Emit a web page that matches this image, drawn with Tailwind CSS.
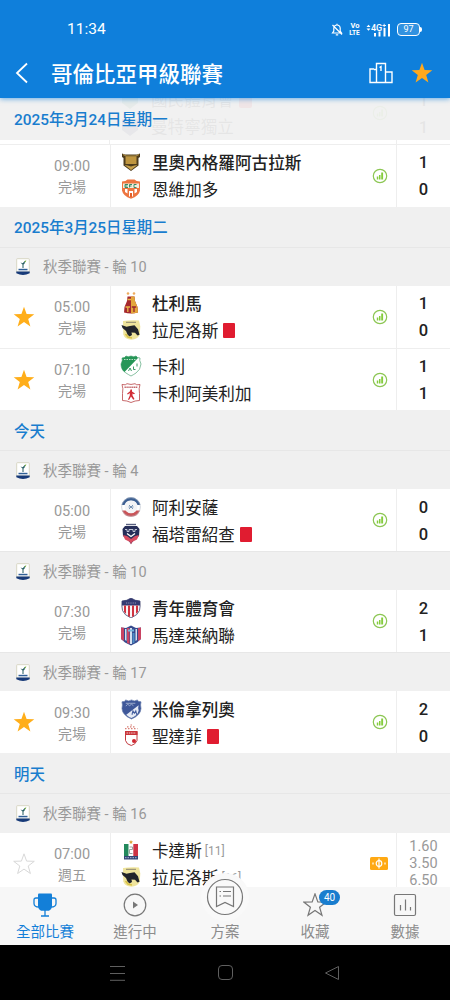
<!DOCTYPE html>
<html lang="zh-Hant">
<head>
    <meta charset="UTF-8">
    <meta name="viewport" content="width=device-width, initial-scale=1.0">
    <title>哥倫比亞甲級聯賽</title>
    <script src="https://cdn.jsdelivr.net/npm/@tailwindcss/browser@4"></script>
</head>
<body class="bg-black font-[Roboto,'Noto_Sans_CJK_TC',sans-serif]">

    <!-- Icons -->
    <svg class="hidden">
        <symbol id="star" viewBox="0 0 22 22"><path d="M11 .8l2.600 7.300 7.700.2-6.100 4.700 2.200 7.500L11 16.100l-6.400 4.400 2.200-7.500L.7 8.300l7.700-.2z"/></symbol>
        <symbol id="stats" viewBox="0 0 16 16">
            <circle cx="8" cy="8" r="6.700" fill="none" stroke="#8cc653" stroke-width="1.200"/>
            <path d="M4.800 8.500h1.500v3H4.800zM7 7h1.500v4.500H7zM9.200 4.500h1.900v7H9.200z" fill="#84cc3c"/>
        </symbol>
        <symbol id="league" viewBox="0 0 14 18">
            <path d="M.7 1.500Q.7.700 1.500.7h11q.8 0 .8.800v12.500H.7z" fill="#fff" stroke="#d0ceb8" stroke-width=".8"/>
            <path d="M.3 13.500h13.400v1.700Q7 18.800.3 15.200z" fill="#173a78"/>
            <path d="M2.500 10.800h9v1.500h-9z" fill="#2f5f96"/>
            <path d="M6.500 10V6.500L4.500 4.500l2.200.8L9.300 2.500 8.500 5.700l-1 .8V10z" fill="#245c60"/>
            <path d="M8.500 3.500l1.800-1.500-.6 2.500z" fill="#7fb53c"/>
        </symbol>
        <symbol id="aguilas" viewBox="0 0 20 20">
            <path d="M1 1.500l3 1h12l3-1v3.500l-1.500 1v7.500L10 19l-7.500-5.500V6L1 5z" fill="#4d3c1d"/>
            <path d="M4.500 4.500h11v7.500h-11z" fill="#bf9640"/>
            <path d="M3.500 13l3 .5 3.500 1 3.500-1 3-.5-6.500 5z" fill="#c7a24d"/>
            <path d="M2 2.500l3 1.500h10l3-1.500" fill="none" stroke="#d0aa50" stroke-width=".8"/>
        </symbol>
        <symbol id="envigado" viewBox="0 0 20 20">
            <path d="M1 2.500Q5 2.500 6.500.5h7Q15 2.500 19 2.500v9Q18 17 10 19.800 2 17 1 11.500z" fill="#ed7540"/>
            <path d="M2 4.500h16v4.500H2z" fill="#f3eee0"/>
            <path d="M4 5.500h3M4 7h2.500M4 5.500v3h3M8.500 8.500v-3H11M8.500 7h2M15.500 5.500h-2.500v3h2.500" fill="none" stroke="#388b65" stroke-width="1"/>
            <path d="M4 10h2.500v4.500L4 13zM8 12h4v5.500H8zM13.500 10H16v3l-2.500 1.500z" fill="#fff"/>
            <path d="M9 14h2v4H9z" fill="#e45e28"/>
        </symbol>
        <symbol id="tolima" viewBox="0 0 20 22">
            <path d="M6.500 4.500h7L14 9l2.500 6 .5 5.500q-7 2-14 0l.5-5.500L6 9z" fill="#a5292f"/>
            <path d="M10 4.500h3.500L14 9l2.500 6 .5 5.500q-3.500 1-7 1z" fill="#e3a63b"/>
            <path d="M4.500 15H9M6.800 15v5M6.500 7.500H10" fill="none" stroke="#e9b548" stroke-width="1.300"/>
            <path d="M10.800 15h4.400M13 15v5" fill="none" stroke="#99252c" stroke-width="1.300"/>
            <circle cx="7" cy="1.500" r="1.300" fill="#efac5e"/><circle cx="13" cy="1.500" r="1.300" fill="#efac5e"/>
        </symbol>
        <symbol id="llaneros" viewBox="0 0 20 20">
            <path d="M2 1q8-1 16-.5l1.300 6-.5 8q-2 5-8.500 5.300-6.500-.5-8-5.300z" fill="#efe49c"/>
            <path d="M5 2.300h10" stroke="#8b8570" stroke-width="1"/>
            <path d="M.5 5l5 1.800L9 6l4.500-.8 3.500 4 1.500 5.500-2 .8-2.500-2.800-3.500-.2.500 2.500-2.500 1.500-2-2L5 11 1.500 8z" fill="#22242a"/>
            <path d="M4.500 14l2.500 3 4 1" fill="none" stroke="#d8c145" stroke-width="1.500"/>
        </symbol>
        <symbol id="cali" viewBox="0 0 22 22">
            <path d="M2 3q3 0 4-2 2 1.500 5 0 3 1.500 5 0 1 2 4 2-1 2 1 6-.5 6-5 9-3 2-5 3-2-1-5-3-5-3-5-9 2-4 1-6z" fill="#fff" stroke="#69b18a" stroke-width=".8"/>
            <path d="M2 3q3 0 4-2 2 1.500 5 0 3 1.500 5 0L18 3 4.500 17Q1 14 1 9q2-4 1-6z" fill="#269657"/>
            <path d="M4 4.500h12" stroke="#b9ddc6" stroke-dasharray="1.500 1"/>
            <path d="M8.500 16l1.500-3 1.500 3M13.500 11.500v3h2M17 8.500v3" fill="none" stroke="#3b9a66" stroke-width="1"/>
        </symbol>
        <symbol id="america" viewBox="0 0 20 20">
            <path d="M1 1.500q4 1 5-.8 4 1.500 8 0 1 1.800 5 .8-1.500 4-.5 9v7q-4.500 0-8.500 2-4-2-8.500-2v-7q1-5-.5-9z" fill="#fff" stroke="#c1595b" stroke-width=".9"/>
            <path d="M3.500 4.300h13" stroke="#c4666a" stroke-width="1.500" stroke-dasharray="1.400 .5"/>
            <path d="M9.500 6.500h1.500v2l3 2-1 .8-1.500-.8v2l2 3.500-1.200.7L10 13.500l-2 3.500-1-.6 1.800-4V10l-2 1.500-.8-.7 3-2.500z" fill="#d22c35"/>
        </symbol>
        <symbol id="alianza" viewBox="0 0 20 20">
            <circle cx="10" cy="10" r="9.500" fill="#fff"/>
            <path d="M.6 8a9.600 9.600 0 0118.800 0h-2.900a7 7 0 00-13 0z" fill="#3c5f92"/>
            <path d="M1 13.500h18a9.600 9.600 0 01-18 0z" fill="#c95458"/>
            <circle cx="10" cy="10" r="6.300" fill="#f3f4f6"/>
            <path d="M8 8l4 4m0-4l-4 4M7.500 10h5" stroke="#6e8cb0" stroke-width=".9"/>
            <circle cx="10" cy="10" r="9.400" fill="none" stroke="#b6bdca" stroke-width=".6"/>
        </symbol>
        <symbol id="fortaleza" viewBox="0 0 20 22">
            <path d="M4 3h12l2.500 3-.5 7-5 4-3 4-3-4-5-4L1.500 6z" fill="#262e59"/>
            <path d="M5 1.500h10" stroke="#596080" stroke-width="1.400"/>
            <path d="M4 6.500h2v2h2v-2h4v2h2v-2h2" fill="none" stroke="#c1c6d6" stroke-width="1"/>
            <path d="M2 12l4 1 4 3 4-3 4-1-2 4.500-5 2.500-1 2.500L9 19l-5-2.500z" fill="#d84b60"/>
            <path d="M6 10.500l4 3 4-3" fill="none" stroke="#fff" stroke-width="1.300"/>
        </symbol>
        <symbol id="junior" viewBox="0 0 20 20">
            <path d="M1 3q5 0 9-3 4 3 9 3 .5 5-.5 9.500Q17 17 10 20 3 17 1.500 12.500.5 8 1 3z" fill="#f9f5f6" stroke="#41456f" stroke-width=".8"/>
            <path d="M1 3q5 0 9-3 4 3 9 3v4.500H1z" fill="#343a72"/>
            <path d="M3 7.500h2v8.200l-2-1.700zM7 7.500h2v11.500l-2-1zM11 7.500h2v10.500l-2 1zM15 7.500h2V14l-2 1.700z" fill="#cf3340"/>
            <path d="M5 5h10" stroke="#8d8fb3" stroke-dasharray="1.200 1"/>
        </symbol>
        <symbol id="union" viewBox="0 0 22 21">
            <path d="M1 2.500l5 .5 5-2.500L16 3l5-.5V14l-4 3.500-6 3-6-3L1 14z" fill="#364b8e"/>
            <path d="M1 2.500l3 .3V16l-3-2zM18 3l3-.5V14l-3 2zM7 3h2.500v16L7 18z" fill="#c94362"/>
            <path d="M5 4h1.500v12L5 15zM10 3h2v16h-2zM15.500 4H17v11l-1.500 1z" fill="#d5e1ee"/>
            <path d="M8 5.500h6" stroke="#78b6db" stroke-width="2"/>
            <path d="M12.500 8v10.500l2-1V8z" fill="#4e8fc5"/>
        </symbol>
        <symbol id="millonarios" viewBox="0 0 22 22">
            <path d="M1 3q3 0 4-2 3 2 6 0 3 2 6 0 1 2 4 2-1 3 0 7-.5 7-10 11Q1.500 17 1 10q1-4 0-7z" fill="#3e5799" stroke="#6278aa" stroke-width=".7"/>
            <path d="M18.500 6.500q-1 3 0 5.500-.8 5-7.500 8-3-1-5.500-3.500z" fill="#e5eaf4"/>
            <path d="M11.500 16.500l1-4 1.500 2.500 1.500-2.500 1 4" fill="none" stroke="#455e9f" stroke-width="1.100"/>
            <path d="M5 7.500l2-2 2 1.500 2-1.500 2 1.500M5 4.500h10" fill="none" stroke="#a8b6d5" stroke-width=".9"/>
        </symbol>
        <symbol id="santafe" viewBox="0 0 20 24">
            <path d="M4.500 7.500h11.500v9q-1.500 4-5.700 5Q5.500 20.500 4.500 16.500z" fill="#fff" stroke="#c23a3f" stroke-width="1"/>
            <path d="M4 7h12.500v4H4z" fill="#c9343a"/>
            <path d="M5.500 9h9.500" stroke="#f0c7c8" stroke-width="1.200" stroke-dasharray="1.500 .8"/>
            <circle cx="13" cy="17" r="2" fill="#cf2630"/>
            <path d="M4 4.700h12.500M6 2.800h8.500M9.500 1h2" stroke="#d87f76" stroke-width="1.200" stroke-dasharray="1.500 1.500"/>
        </symbol>
        <symbol id="once" viewBox="0 0 20 20">
            <path d="M3 4h4.700v12H3z" fill="#23895c"/>
            <path d="M7.700 4h4.600v12H7.700z" fill="#fff"/>
            <path d="M12.300 4H17v12h-4.700z" fill="#cf3445"/>
            <path d="M3 16h14v3.500H3z" fill="#344675"/>
            <path d="M4 17.700h12" stroke="#a9b5d2" stroke-dasharray="1.500 1"/>
            <path d="M8.500 7h3v2.500h-3v4h3" fill="none" stroke="#8e9d96" stroke-width=".9"/>
            <path d="M10 0l.6 1.300 1.400.2-1 1 .2 1.300L10 3.200l-1.200.6.2-1.300-1-1 1.400-.2z" fill="#dfa43b"/>
        </symbol>
        <symbol id="nacional" viewBox="0 0 20 20"><path d="M2 1h16v12l-8 6-8-6z" fill="#47906a"/></symbol>
        <symbol id="medellin" viewBox="0 0 20 20"><path d="M2 2h16v11l-8 6-8-6z" fill="#3c4775"/></symbol>
    </svg>

    <div class="relative flex h-[1000px] w-[450px] flex-col overflow-hidden">

        <!-- Header -->
        <header class="relative z-20 h-[98px] shrink-0 bg-[#0f7fdb] text-white shadow-[0_1px_5px_rgba(15,127,219,0.6)]">
            <div class="flex h-[50px] items-center pt-[9px] pr-[28px] pl-[67px]">
                <span class="text-[15.500px]">11:34</span>
                <div class="ml-auto flex items-center">
                    <svg class="h-[13px] w-[12px]" viewBox="0 0 12 13" fill="none" stroke="#fff" stroke-width="1.200">
                        <path d="M1.500 10h9L9.200 8V5.200A3.200 3.200 0 006 2a3.200 3.200 0 00-3.200 3.200V8zM6 .8V2M4.800 11.800h2.400M1.500 2l9.500 9.500"/>
                    </svg>
                    <span class="ml-[7px] flex w-[10px] flex-col text-center text-[7.500px] leading-[6.500px] font-bold"><span>Vo</span><span class="-ml-px text-[6.500px]">LTE</span></span>
                    <svg class="ml-[6px] h-[14px] w-[24px]" viewBox="0 0 24 14" fill="#fff">
                        <path d="M.5 4L2.500 1.800 4.500 4zM.5 5.500L2.500 7.700l2-2.200zM8 10h2v3.500H8zM12.500 8.500h2v5h-2zM17.500 5h2v8.500h-2zM22 1h2v12.500h-2z"/>
                        <text x="5" y="7.500" font-size="9" font-weight="500" font-family="Roboto">4G</text>
                        <path d="M16.500 2.500h3.500M18.200.8v3.500" stroke="#fff" stroke-width=".9"/>
                    </svg>
                    <div class="ml-[7px] flex h-[13px] w-[23px] items-center justify-center rounded-[4px] border border-white bg-white/15 text-[9px] leading-none">97</div>
                    <div class="h-[5px] w-[2px] rounded-r bg-white"></div>
                </div>
            </div>
            <div class="flex h-[46px] items-center pr-[17px] pl-[15px]">
                <svg class="h-[22px] w-[14px]" viewBox="0 0 14 22" fill="none" stroke="#fff" stroke-width="1.800"><path d="M12 1.500L2 11l10 9.500"/></svg>
                <h1 class="ml-[22px] pt-[3px] text-[21.500px] leading-none font-medium">哥倫比亞甲級聯賽</h1>
                <svg class="ml-auto h-[22px] w-[24px]" viewBox="0 0 24 22" fill="none" stroke="#fff" stroke-width="1.400">
                    <path d="M7.500 20.500V1.500h9v19M7.500 7.500H5M5 7H1v13.500h22V10h-6.500M10.500 5.500L12 4.500V9"/>
                </svg>
                <svg class="ml-[18px] size-[22px] fill-[#ffa81c]"><use href="#star"/></svg>
            </div>
        </header>

        <!-- Match list -->
        <main class="relative h-[789px] shrink-0 overflow-hidden bg-white text-[#222]">
            <div class="absolute inset-x-0 top-0 z-10 flex h-[42px] items-center bg-[#f0f0f0]/95 pt-[4px] pl-[14px] text-[15.400px] font-medium text-[#197dce]">2025年3月24日星期一</div>

            <div class="-mt-4 flex h-[63px] border-b border-[#eee]">
                <div class="w-[110px] border-r border-[#eee]"></div>
                <div class="flex flex-1 flex-col pt-[5px] pl-[10px] text-[16.600px] leading-[27px]">
                    <div class="flex items-center"><svg class="mr-[11px] mb-[2px] size-5"><use href="#nacional"/></svg>國民體育會<i class="ml-[5px] h-[15px] w-[13px] rounded-[2px] bg-[#e01c30]"></i></div>
                    <div class="flex items-center"><svg class="mr-[11px] mb-[2px] size-5"><use href="#medellin"/></svg>曼特寧獨立</div>
                </div>
                <svg class="mr-[8px] size-4 self-center"><use href="#stats"/></svg>
                <div class="w-[54px] border-l border-[#eee] pt-[5px] text-center text-[16.500px] leading-[27px] font-medium">1<br>1</div>
            </div>

            <div class="flex h-[62px] bg-white">
                <div class="flex w-12 items-center justify-center"></div>
                <div class="w-[62px] pt-[11px] pr-[14px] text-center text-[14.500px] leading-[21px] text-[#999]">09:00<br><span class="text-[14px]">完場</span></div>
                <div class="flex flex-1 flex-col border-l border-[#eee] pt-[5px] pl-[10px] text-[16.600px] leading-[27px]">
                    <div class="flex items-center font-medium"><svg class="mr-[11px] mb-[3px] size-5"><use href="#aguilas"/></svg>里奧內格羅阿古拉斯</div>
                    <div class="flex items-center"><svg class="mr-[11px] mb-[3px] size-5"><use href="#envigado"/></svg>恩維加多</div>
                </div>
                <svg class="mr-[8px] size-4 self-center"><use href="#stats"/></svg>
                <div class="w-[54px] border-l border-[#eee] pt-[4px] text-center text-[16.500px] leading-[27px] font-medium">1<br>0</div>
            </div>

            <div class="flex h-[41px] items-center border-b border-[#e7e7e7] bg-[#f0f0f0] pt-[4px] pl-[14px] text-[15.400px] font-medium text-[#197dce]">2025年3月25日星期二</div>
            <div class="flex h-[38px] items-center bg-[#f0f0f0] pt-[2px] pl-4 text-[14.500px] text-[#999]"><svg class="mr-[13px] mb-[2px] h-[18px] w-[14px]"><use href="#league"/></svg>秋季聯賽 - 輪 10</div>

            <div class="flex h-[62px] bg-white">
                <div class="flex w-12 items-center justify-center"><svg class="size-[22px] fill-[#ffae1a]"><use href="#star"/></svg></div>
                <div class="w-[62px] pt-[11px] pr-[14px] text-center text-[14.500px] leading-[21px] text-[#999]">05:00<br><span class="text-[14px]">完場</span></div>
                <div class="flex flex-1 flex-col border-l border-[#eee] pt-[5px] pl-[10px] text-[16.600px] leading-[27px]">
                    <div class="flex items-center font-medium"><svg class="mr-[11px] mb-[3px] h-[22px] w-5"><use href="#tolima"/></svg>杜利馬</div>
                    <div class="flex items-center"><svg class="mr-[11px] mb-[3px] size-5"><use href="#llaneros"/></svg>拉尼洛斯<i class="mb-[2px] ml-[5px] h-[15px] w-[12px] rounded-[1px] bg-[#e01c30]"></i></div>
                </div>
                <svg class="mr-[8px] size-4 self-center"><use href="#stats"/></svg>
                <div class="w-[54px] border-l border-[#eee] pt-[4px] text-center text-[16.500px] leading-[27px] font-medium">1<br>0</div>
            </div>
            <div class="flex h-[62px] border-t border-[#eee] bg-white">
                <div class="flex w-12 items-center justify-center"><svg class="size-[22px] fill-[#ffae1a]"><use href="#star"/></svg></div>
                <div class="w-[62px] pt-[11px] pr-[14px] text-center text-[14.500px] leading-[21px] text-[#999]">07:10<br><span class="text-[14px]">完場</span></div>
                <div class="flex flex-1 flex-col border-l border-[#eee] pt-[5px] pl-[9px] text-[16.600px] leading-[27px]">
                    <div class="flex items-center"><svg class="mr-[10px] mb-[3px] size-[22px]"><use href="#cali"/></svg>卡利</div>
                    <div class="flex items-center pl-px"><svg class="mr-[11px] mb-[3px] size-5"><use href="#america"/></svg>卡利阿美利加</div>
                </div>
                <svg class="mr-[8px] size-4 self-center"><use href="#stats"/></svg>
                <div class="w-[54px] border-l border-[#eee] pt-[4px] text-center text-[16.500px] leading-[27px] font-medium">1<br>1</div>
            </div>

            <div class="flex h-[41px] items-center border-b border-[#e7e7e7] bg-[#f0f0f0] pt-[5px] pl-[14px] text-[15.400px] font-medium text-[#197dce]">今天</div>
            <div class="flex h-[38px] items-center bg-[#f0f0f0] pt-[3px] pl-4 text-[14.500px] text-[#999]"><svg class="mr-[13px] mb-[2px] h-[18px] w-[14px]"><use href="#league"/></svg>秋季聯賽 - 輪 4</div>

            <div class="flex h-[62px] bg-white">
                <div class="flex w-12 items-center justify-center"></div>
                <div class="w-[62px] pt-[12px] pr-[14px] text-center text-[14.500px] leading-[21px] text-[#999]">05:00<br><span class="text-[14px]">完場</span></div>
                <div class="flex flex-1 flex-col border-l border-[#eee] pt-[6px] pl-[10px] text-[16.600px] leading-[27px]">
                    <div class="flex items-center"><svg class="mr-[11px] mb-[3px] size-5"><use href="#alianza"/></svg>阿利安薩</div>
                    <div class="flex items-center"><svg class="mr-[11px] mb-[3px] h-[22px] w-5"><use href="#fortaleza"/></svg>福塔雷紹查<i class="mb-[2px] ml-[5px] h-[15px] w-[12px] rounded-[1px] bg-[#e01c30]"></i></div>
                </div>
                <svg class="mr-[8px] size-4 self-center"><use href="#stats"/></svg>
                <div class="w-[54px] border-l border-[#eee] pt-[5px] text-center text-[16.500px] leading-[27px] font-medium">0<br>0</div>
            </div>

            <div class="flex h-[39px] items-center border-t border-[#e7e7e7] bg-[#f0f0f0] pt-[3px] pl-4 text-[14.500px] text-[#999]"><svg class="mr-[13px] mb-[2px] h-[18px] w-[14px]"><use href="#league"/></svg>秋季聯賽 - 輪 10</div>

            <div class="flex h-[62px] bg-white">
                <div class="flex w-12 items-center justify-center"></div>
                <div class="w-[62px] pt-[12px] pr-[14px] text-center text-[14.500px] leading-[21px] text-[#999]">07:30<br><span class="text-[14px]">完場</span></div>
                <div class="flex flex-1 flex-col border-l border-[#eee] pt-[6px] pl-[9px] text-[16.600px] leading-[27px]">
                    <div class="flex items-center pl-px font-medium"><svg class="mr-[11px] mb-[3px] size-5"><use href="#junior"/></svg>青年體育會</div>
                    <div class="flex items-center"><svg class="mr-[10px] mb-[3px] h-[21px] w-[22px]"><use href="#union"/></svg>馬達萊納聯</div>
                </div>
                <svg class="mr-[8px] size-4 self-center"><use href="#stats"/></svg>
                <div class="w-[54px] border-l border-[#eee] pt-[5px] text-center text-[16.500px] leading-[27px] font-medium">2<br>1</div>
            </div>

            <div class="flex h-[39px] items-center border-t border-[#e7e7e7] bg-[#f0f0f0] pt-[3px] pl-4 text-[14.500px] text-[#999]"><svg class="mr-[13px] mb-[2px] h-[18px] w-[14px]"><use href="#league"/></svg>秋季聯賽 - 輪 17</div>

            <div class="flex h-[62px] bg-white">
                <div class="flex w-12 items-center justify-center"><svg class="size-[22px] fill-[#ffae1a]"><use href="#star"/></svg></div>
                <div class="w-[62px] pt-[12px] pr-[14px] text-center text-[14.500px] leading-[21px] text-[#999]">09:30<br><span class="text-[14px]">完場</span></div>
                <div class="flex flex-1 flex-col border-l border-[#eee] pt-[6px] pl-[10px] text-[16.600px] leading-[27px]">
                    <div class="flex items-center font-medium"><svg class="mr-[10px] mb-[3px] size-[21px]"><use href="#millonarios"/></svg>米倫拿列奧</div>
                    <div class="flex items-center"><svg class="mr-[11px] mb-[3px] h-[24px] w-[20px]"><use href="#santafe"/></svg>聖達菲<i class="mb-[2px] ml-[5px] h-[15px] w-[12px] rounded-[1px] bg-[#e01c30]"></i></div>
                </div>
                <svg class="mr-[8px] size-4 self-center"><use href="#stats"/></svg>
                <div class="w-[54px] border-l border-[#eee] pt-[5px] text-center text-[16.500px] leading-[27px] font-medium">2<br>0</div>
            </div>

            <div class="flex h-[41px] items-center border-b border-[#e7e7e7] bg-[#f0f0f0] pt-[5px] pl-[14px] text-[15.400px] font-medium text-[#197dce]">明天</div>
            <div class="flex h-[39px] items-center bg-[#f0f0f0] pt-[2px] pl-4 text-[14.500px] text-[#999]"><svg class="mr-[13px] mb-[2px] h-[18px] w-[14px]"><use href="#league"/></svg>秋季聯賽 - 輪 16</div>

            <div class="flex h-[62px] bg-white">
                <div class="flex w-12 items-center justify-center"><svg class="size-[22px] fill-none stroke-[#d8d8d8]"><use href="#star"/></svg></div>
                <div class="w-[62px] pt-[11px] pr-[14px] text-center text-[14.500px] leading-[21px] text-[#999]">07:00<br><span class="text-[14px]">週五</span></div>
                <div class="flex flex-1 flex-col border-l border-[#eee] pt-[5px] pl-[10px] text-[16.600px] leading-[27px]">
                    <div class="flex items-center"><svg class="mr-[11px] mb-[3px] size-5"><use href="#once"/></svg>卡達斯<span class="ml-[3px] text-[12px] text-[#999]">[11]</span></div>
                    <div class="flex items-center"><svg class="mr-[11px] mb-[3px] size-5"><use href="#llaneros"/></svg>拉尼洛斯<span class="ml-[3px] text-[12px] text-[#999]">[16]</span></div>
                </div>
                <svg class="mr-[8px] mb-px h-[13px] w-[18px] self-center" viewBox="0 0 18 13">
                    <rect width="18" height="13" rx="1.500" fill="#ffa913"/>
                    <path d="M9 1.500v10M3 5.500v2M15 5.500v2" stroke="#fff" stroke-width="1.200"/>
                    <circle cx="9" cy="6.500" r="2.800" fill="none" stroke="#fff" stroke-width="1.200"/>
                </svg>
                <div class="w-[54px] border-l border-[#eee] pt-[5px] text-center text-[14.500px] leading-[17px] text-[#999]">1.60<br>3.50<br>6.50</div>
            </div>
        </main>

        <!-- Bottom navigation -->
        <nav class="relative z-20 grid h-[58px] shrink-0 grid-cols-5 bg-[#f7f7f7] text-center text-[14.500px] leading-[20px] text-[#8c8c8c]">
            <div class="flex flex-col items-center pt-[6px] text-[#137fd8]">
                <svg class="size-6" viewBox="0 0 24 24" fill="none" stroke="#137fd8" stroke-width="1.300">
                    <path d="M5 1.500Q5 .5 6 .5h12q1 0 1 1V13q0 3-3 4.800H8Q5 16 5 13z" fill="#137fd8" stroke="none"/>
                    <path d="M5.500 5H3Q1 5 1 7v3.500Q1 14 6 14M18.500 5H21q2 0 2 2v3.500q0 3.500-5 3.500M12 17v6M8 23h8"/>
                </svg>
                <span class="mt-[6px]">全部比賽</span>
            </div>
            <div class="flex flex-col items-center pt-[6px]">
                <svg class="size-6" viewBox="0 0 24 24" fill="none" stroke="#777" stroke-width="1.200"><circle cx="12" cy="12" r="10.800"/><path d="M10 8.500v7l5-3.500z" fill="#777" stroke="none"/></svg>
                <span class="mt-[6px]">進行中</span>
            </div>
            <div class="relative flex flex-col items-center pt-[36px]">
                <div class="absolute top-[-14px] left-[21px] flex size-12 items-center justify-center rounded-full bg-[#f9f9f9]">
                    <svg class="size-[38px]" viewBox="0 0 38 38" fill="none" stroke="#777" stroke-width="1.200">
                        <circle cx="19" cy="19" r="17.500"/>
                        <path d="M10.500 9h17v19.500L19 24.500l-8.500 4zM13.500 13.500h1.500M17 13.500h8M13.500 18h1.500M17 18h8"/>
                    </svg>
                </div>
                <span>方案</span>
            </div>
            <div class="relative flex flex-col items-center pt-[6px]">
                <svg class="size-6 fill-none stroke-[#777] stroke-[1.100px]"><use href="#star"/></svg>
                <span class="absolute top-[3px] left-[49px] flex h-[15px] w-[21px] items-center justify-center rounded-full bg-[#197dce] text-[10px] text-white">40</span>
                <span class="mt-[6px]">收藏</span>
            </div>
            <div class="flex flex-col items-center pt-[6px]">
                <svg class="size-6" viewBox="0 0 24 24" fill="none" stroke="#777" stroke-width="1.200"><rect x="1.500" y="1.500" width="21" height="21" rx="1.500"/><path d="M7.500 12v5.500M12.500 6.500v11M17.500 14v3.500"/></svg>
                <span class="mt-[6px]">數據</span>
            </div>
        </nav>

        <!-- System buttons -->
        <div class="flex h-[55px] items-center bg-black pl-[109px]">
            <svg class="h-4 w-[17px]" viewBox="0 0 17 16" stroke="#5f5f5f"><path d="M1 1.500h15M1 8.500h15M1 15.300h15"/></svg>
            <div class="ml-[92px] size-[15px] rounded-[4px] border border-[#5f5f5f]"></div>
            <svg class="ml-[91px] h-4 w-4" viewBox="0 0 16 16" fill="none" stroke="#5f5f5f"><path d="M14.500 1.500v13L1.500 8z" stroke-linejoin="round"/></svg>
        </div>
    </div>
</body>
</html>
